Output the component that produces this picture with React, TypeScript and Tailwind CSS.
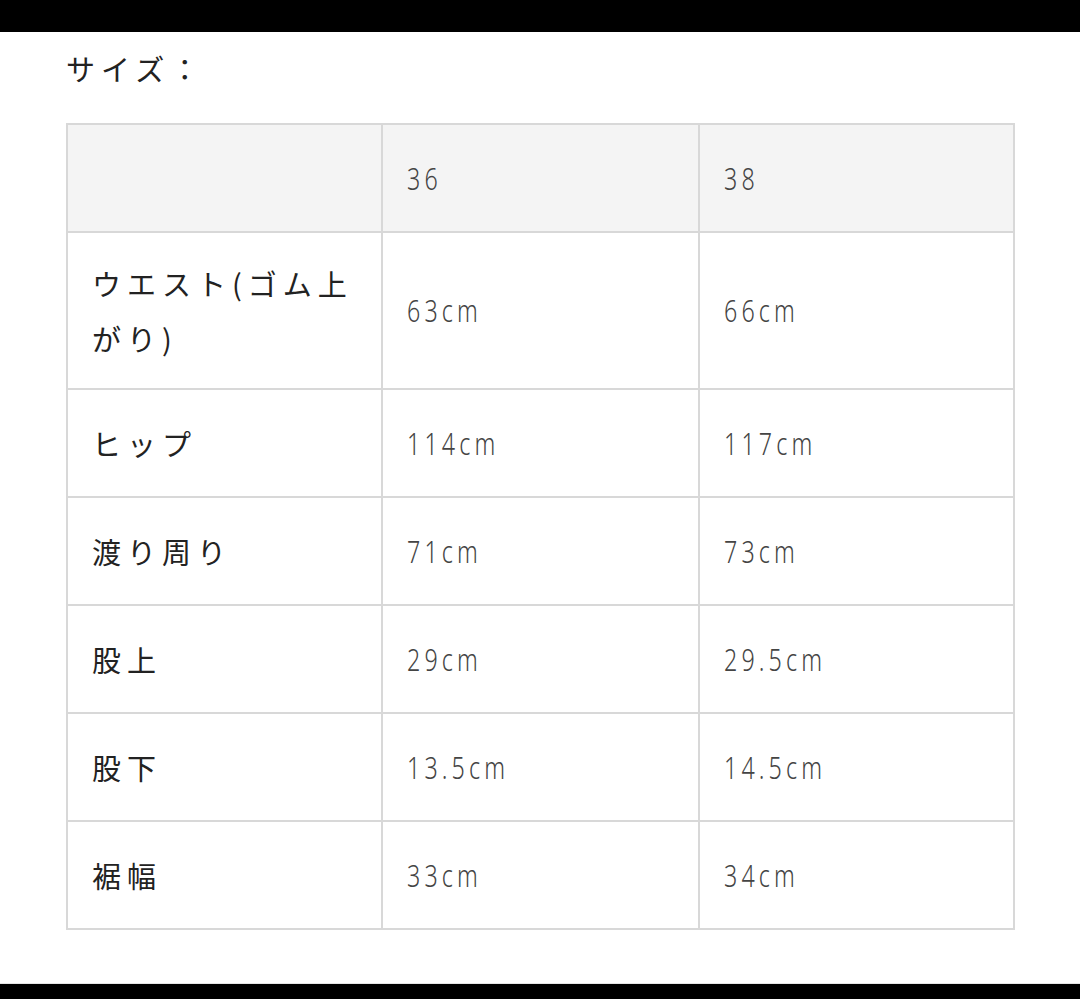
import React from 'react';

type Row = { label: React.ReactNode; a: string; b: string; tall?: boolean };

const rows: Row[] = [
    { label: <>ウエスト(ゴム上<br />がり)</>, a: '63cm', b: '66cm', tall: true },
    { label: 'ヒップ', a: '114cm', b: '117cm' },
    { label: '渡り周り', a: '71cm', b: '73cm' },
    { label: '股上', a: '29cm', b: '29.5cm' },
    { label: '股下', a: '13.5cm', b: '14.5cm' },
    { label: '裾幅', a: '33cm', b: '34cm' },
];

const jp = "font-['Noto_Sans_CJK_JP',sans-serif]";
// narrow digits: squeeze Noto Sans horizontally
const num = "inline-block origin-left scale-x-[0.75] font-['Noto_Sans',sans-serif] font-light text-[31px] tracking-[5.5px] text-[#444]";
const cell = 'border-2 border-[#d8d8d8] pl-6 align-middle';

const App: React.FC = () => {
    return (
        <div className="w-[1080px] h-[999px] bg-white flex flex-col">
            <div className="h-[32px] bg-black" />
            <div className="flex-1 px-[66px] pt-[16px]">
                <h1 className={`${jp} text-[29px] leading-[40px] tracking-[6px] text-[#222]`}>サイズ：</h1>
                <table className="mt-[35px] w-[947px] border-collapse table-fixed">
                    <colgroup>
                        <col className="w-[315px]" />
                        <col className="w-[317px]" />
                        <col className="w-[315px]" />
                    </colgroup>
                    <tbody>
                        <tr className="h-[108px] bg-[#f4f4f4]">
                            <td className={cell} />
                            <td className={cell}><span className={num}>36</span></td>
                            <td className={cell}><span className={num}>38</span></td>
                        </tr>
                        {rows.map((r, i) => (
                            <tr key={i} className={r.tall ? 'h-[157px]' : 'h-[108px]'}>
                                <td className={cell}>
                                    <div className={`${jp} text-[29px] leading-[55px] tracking-[6px] text-[#222]`}>{r.label}</div>
                                </td>
                                <td className={cell}><span className={num}>{r.a}</span></td>
                                <td className={cell}><span className={num}>{r.b}</span></td>
                            </tr>
                        ))}
                    </tbody>
                </table>
            </div>
            <div className="h-[16px] bg-black border-t border-[#e5e5e5]" />
        </div>
    );
};

export default App;
